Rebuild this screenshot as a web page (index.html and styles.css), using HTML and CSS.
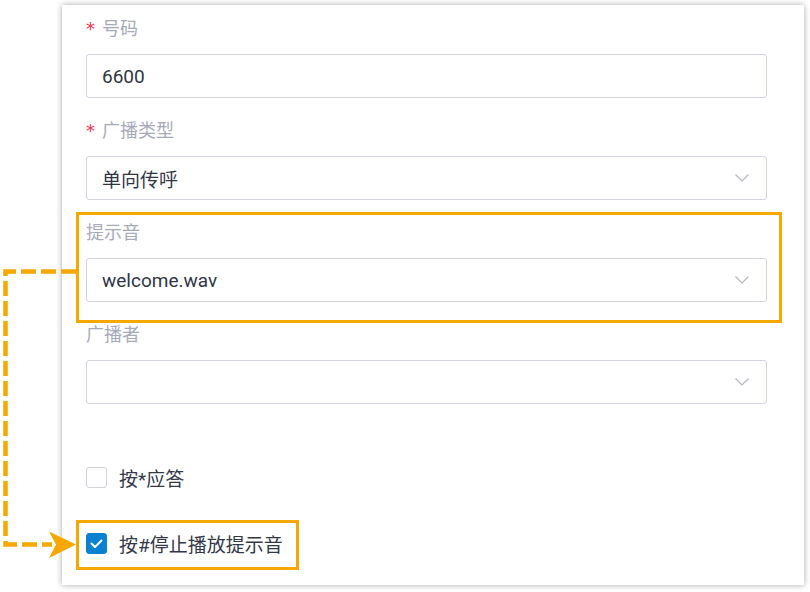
FILE: index.html
```html
<!DOCTYPE html>
<html lang="zh">
<head>
<meta charset="utf-8">
<link rel="stylesheet" href="styles.css">
</head>
<body>
<div class="panel">
  <div class="item">
    <div class="label"><span class="req">*</span>号码</div>
    <div class="field">6600</div>
  </div>
  <div class="item">
    <div class="label"><span class="req">*</span>广播类型</div>
    <div class="field select">单向传呼<svg class="chev" viewBox="0 0 14 8"><path d="M0.5 0.5 L7 7 L13.5 0.5"/></svg></div>
  </div>
  <div class="item">
    <div class="label">提示音</div>
    <div class="field select">welcome.wav<svg class="chev" viewBox="0 0 14 8"><path d="M0.5 0.5 L7 7 L13.5 0.5"/></svg></div>
  </div>
  <div class="item">
    <div class="label">广播者</div>
    <div class="field select"><svg class="chev" viewBox="0 0 14 8"><path d="M0.5 0.5 L7 7 L13.5 0.5"/></svg></div>
  </div>
  <div class="checks">
    <label class="check"><span class="box"></span>按*应答</label>
    <label class="check"><span class="box on"><svg viewBox="0 0 21 21"><path d="M5.5 10.5 L9 14 L15.5 7.5"/></svg></span>按#停止播放提示音</label>
  </div>
</div>

<div class="hl hl-tone"></div>
<div class="hl hl-check"></div>
<svg class="connector" width="90" height="300" viewBox="0 260 90 300">
  <path class="dash" d="M76 271.5 H5.5 V544.5 H52"/>
  <path class="head" d="M49 531.5 L76 544.5 L49 558 L56 544.5 Z"/>
</svg>
</body>
</html>
```

FILE: styles.css
```css
* { box-sizing: border-box; }
html, body { margin: 0; padding: 0; background: #fff; }
body {
  width: 810px;
  height: 592px;
  position: relative;
  overflow: hidden;
  font-family: Roboto, "Noto Sans CJK SC", sans-serif;
}
.panel {
  margin: 5px 0 0 62px;
  width: 742px;
  height: 580px;
  background: #fff;
  box-shadow: 0 0 6px rgba(0, 0, 0, 0.35);
  padding: 12px 37px 0 24px;
}
.item { margin-bottom: 21px; }
.label {
  height: 24px;
  line-height: 24px;
  font-size: 18px;
  color: #a7aabb;
  margin-bottom: 13px;
}
.req {
  color: #f5304a;
  font-size: 18px;
  margin-right: 7px;
  font-family: "DejaVu Sans", sans-serif;
}
.field {
  height: 44px;
  border: 1px solid #d3d4de;
  border-radius: 3px;
  padding: 0 17px 0 15px;
  font-size: 19px;
  color: #303546;
  display: flex;
  align-items: center;
}
.select { justify-content: space-between; }
.chev { width: 14px; height: 8px; margin-left: auto; flex: none; }
.chev path { fill: none; stroke: #b4b5bd; stroke-width: 1.2; }
.checks {
  margin-top: 63px;
  display: flex;
  flex-direction: column;
  gap: 45px;
}
.check {
  display: flex;
  align-items: center;
  height: 21px;
  font-size: 19px;
  color: #333848;
}
.box {
  flex: none;
  width: 21px;
  height: 21px;
  border: 1px solid #d0d2dc;
  border-radius: 3px;
  margin-right: 12px;
  background: #fff;
  position: relative;
}
.box.on { background: #0a80d1; border-color: #0a80d1; }
.box svg { position: absolute; left: -1px; top: -1px; width: 21px; height: 21px; }
.box path { fill: none; stroke: #fff; stroke-width: 2; stroke-linecap: round; stroke-linejoin: round; }
.hl {
  position: absolute;
  border: 3px solid #f6a800;
}
.hl-tone { left: 76px; top: 212px; width: 706px; height: 111px; }
.hl-check { left: 76px; top: 520px; width: 223px; height: 50px; }
.connector { position: absolute; left: 0; top: 260px; }
.dash { fill: none; stroke: #f6a800; stroke-width: 4.5; stroke-dasharray: 15 5; }
.head { fill: #f6a800; }
```
